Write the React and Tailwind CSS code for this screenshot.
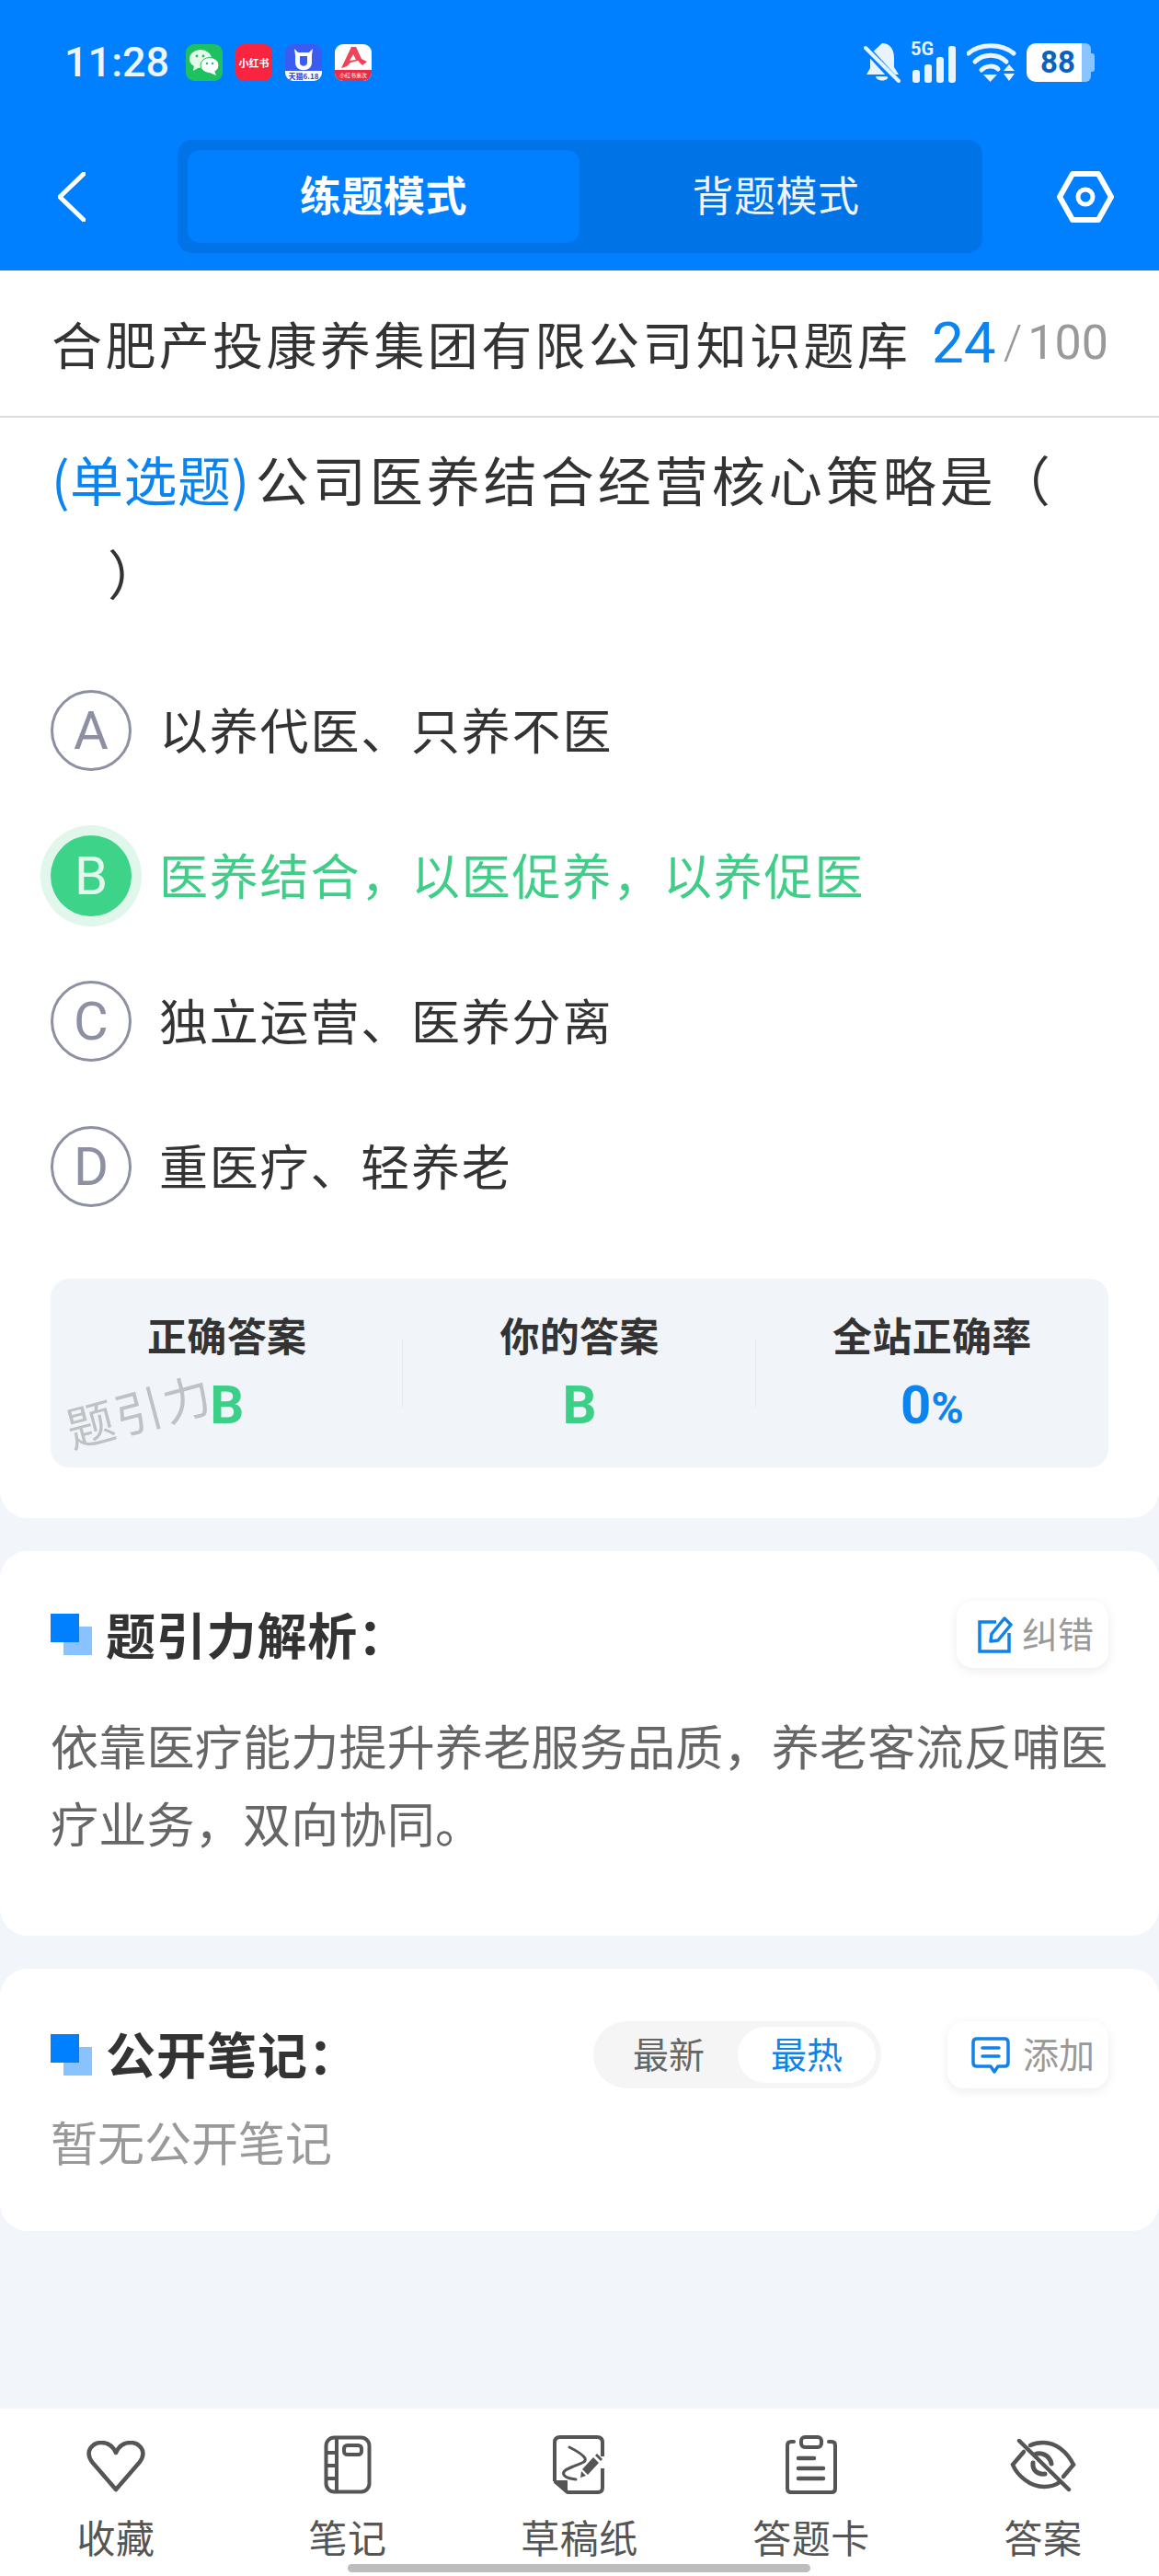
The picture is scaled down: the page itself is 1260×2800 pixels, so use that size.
import React from "react";

const Back = () => (
  <svg width="30" height="54" viewBox="0 0 30 54" className="shrink-0">
    <path d="M28 2 L2 27 L28 52" fill="none" stroke="#fff" strokeWidth="5" strokeLinecap="round" strokeLinejoin="miter" />
  </svg>
);
const Hex = () => (
  <svg width="62" height="56" viewBox="0 0 62 56" className="shrink-0">
    <path d="M17 3 H45 L59 28 L45 53 H17 L3 28 Z" fill="none" stroke="#fff" strokeWidth="6" strokeLinejoin="round" />
    <circle cx="31" cy="28" r="8" fill="none" stroke="#fff" strokeWidth="5" />
  </svg>
);
const Bell = () => (
  <svg width="40" height="44" viewBox="0 0 40 44" className="shrink-0">
    <path d="M20 1 C29 1 33 8 33 17 V27 L38 35 H3 L7 28 V13 Z" fill="#e8f4ff" />
    <path d="M13 37 H27 C26 43 14 43 13 37Z" fill="#e8f4ff" />
    <path d="M0 4 L36 43" stroke="#0080ff" strokeWidth="8" />
    <path d="M2 6 L38 42" stroke="#e8f4ff" strokeWidth="4" strokeLinecap="round" />
  </svg>
);
const Signal = () => (
  <div className="relative w-[50px] h-[44px] shrink-0">
    <span className="absolute left-0 top-[-5px] text-[20px] leading-[24px] font-bold text-[#e8f4ff] font-['Roboto',sans-serif]">5G</span>
    <svg width="50" height="44" viewBox="0 0 50 44" className="absolute left-0 top-0">
      <rect x="2" y="30" width="8" height="14" rx="3" fill="#e8f4ff" />
      <rect x="15" y="24" width="8" height="20" rx="3" fill="#e8f4ff" />
      <rect x="28" y="16" width="8" height="28" rx="3" fill="#e8f4ff" />
      <rect x="41" y="0" width="8" height="44" rx="3" transform="translate(0 4) scale(1 .91)" fill="#e8f4ff" />
    </svg>
  </div>
);
const Wifi = () => (
  <svg width="54" height="44" viewBox="0 0 54 44" className="shrink-0">
    <g fill="none" stroke="#e8f4ff" strokeWidth="5" strokeLinecap="round">
      <path d="M2 12 C14 1 38 1 51 12" />
      <path d="M9 21 C18 12 34 12 43 21" />
      <path d="M16 30 C21 25 30 25 34 29" />
    </g>
    <path d="M18 35 H33 L25.5 43 Z" fill="#e8f4ff" />
    <path d="M46 24 L52 31 H40 Z M40 34 H52 L46 42 Z" fill="#e8f4ff" />
  </svg>
);
const Battery = () => (
  <div className="relative flex w-[74px] h-[42px] shrink-0">
    <div className="w-[60px] h-[42px] bg-white rounded-l-[10px] flex items-center justify-center pl-[8px] text-[33px] leading-[42px] font-bold text-[#0a62be] font-['Roboto',sans-serif]">88</div>
    <div className="w-[10px] h-[42px] bg-[#8cc4ff] rounded-r-[6px]" />
    <div className="w-[4px] h-[20px] mt-[11px] bg-[#8cc4ff] rounded-r-[3px]" />
  </div>
);
const Wechat = () => (
  <div className="w-[40px] h-[40px] rounded-[9px] bg-[#1dc160] shrink-0 flex items-center justify-center">
    <svg width="34" height="30" viewBox="0 0 34 30">
      <ellipse cx="13" cy="11" rx="12" ry="10" fill="#e4f9ea" />
      <path d="M6 18 L5 24 L12 20 Z" fill="#e4f9ea" />
      <ellipse cx="23" cy="18" rx="10" ry="8.5" fill="#fff" stroke="#1dc160" strokeWidth="1" />
      <path d="M28 24 L30 29 L23 26 Z" fill="#fff" />
      <circle cx="9" cy="8" r="1.4" fill="#1dc160" /><circle cx="16" cy="8" r="1.4" fill="#1dc160" />
      <circle cx="20" cy="16" r="1.2" fill="#1dc160" /><circle cx="26" cy="16" r="1.2" fill="#1dc160" />
    </svg>
  </div>
);
const Xhs = () => (
  <div className="w-[40px] h-[40px] rounded-[9px] bg-[#f9243f] shrink-0 flex items-center justify-center text-[11px] leading-none font-bold text-white whitespace-nowrap">
    <span>小红书</span>
  </div>
);
const Tmall = () => (
  <div className="relative w-[40px] h-[40px] rounded-[9px] overflow-hidden bg-[#3a5cf0] shrink-0">
    <svg width="40" height="30" viewBox="0 0 40 30" className="absolute left-0 top-0">
      <path d="M10 5 L14 9 H26 L30 5 L29 12 V20 C29 31 11 31 11 20 V12 Z" fill="#fff" />
      <path d="M16 13 H24 V20 C24 25 16 25 16 20 Z" fill="#3a5cf0" />
    </svg>
    <div className="absolute left-0 right-0 bottom-0 h-[11px] bg-white text-[8px] leading-[11px] text-center font-bold text-[#2a45c9] whitespace-nowrap">天猫6.18</div>
  </div>
);
const RedA = () => (
  <div className="relative w-[40px] h-[40px] rounded-[9px] overflow-hidden bg-white shrink-0">
    <svg width="40" height="30" viewBox="0 0 40 30" className="absolute left-0 top-0">
      <path d="M18 3 L23 3 L29 16 L35 19 L30 23 L25 18 L17 20 C14 24 11 25 7 26 Z" fill="#f0435a" />
      <path d="M20 11 L23 17 L16 18 Z" fill="#fff" />
    </svg>
    <div className="absolute left-0 right-0 bottom-0 h-[12px] bg-[#ea2b45] text-[6px] leading-[12px] text-center text-white whitespace-nowrap">小红书素次</div>
  </div>
);

const Option = ({ letter, text, selected }) => (
  <div className="h-[158px] flex items-center">
    {selected ? (
      <div className="w-[88px] h-[88px] rounded-full bg-[#3dd388] shadow-[0_0_0_11px_#e2f7ec] flex items-center justify-center text-[58px] leading-none text-[#e2f9ee] font-['Roboto',sans-serif] shrink-0">{letter}</div>
    ) : (
      <div className="w-[88px] h-[88px] rounded-full border-[3px] border-[#8d8fa3] flex items-center justify-center text-[58px] leading-none text-[#8d8fa3] font-['Roboto',sans-serif] shrink-0">{letter}</div>
    )}
    <div className={`ml-[30px] mb-[4px] text-[53px] tracking-[1.8px] leading-[70px] ${selected ? "text-[#3fcd88]" : "text-[#333333]"}`}>{text}</div>
  </div>
);

const Stat = ({ label, children, border }) => (
  <div className="relative flex-1 h-full flex flex-col items-center">
    <div className="mt-[37px] text-[43px] leading-[46px] font-bold tracking-[0.3px] text-[#333333]">{label}</div>
    <div className="mt-[18px] h-[72px] flex items-center font-bold text-[58px] leading-none font-['Roboto',sans-serif]">{children}</div>
    {border && <div className="absolute right-0 top-[66px] h-[74px] w-px bg-[#e6e9ed]" />}
  </div>
);

const SquareMark = () => (
  <div className="relative w-[45px] h-[45px] shrink-0">
    <div className="absolute right-0 bottom-0 w-[31px] h-[31px] bg-[#88c2ff]" />
    <div className="absolute left-0 top-0 w-[31px] h-[31px] bg-[#0080ff]" />
  </div>
);

const EditIcon = () => (
  <svg width="38" height="40" viewBox="0 0 38 40" className="shrink-0">
    <path d="M20 6 H2 V38 H34 V18" fill="none" stroke="#1183e8" strokeWidth="3.5" />
    <path d="M14 27 L15 19 L29 2 L36 9 L22 26 Z" fill="#fff" stroke="#1183e8" strokeWidth="3.5" strokeLinejoin="round" />
  </svg>
);
const NoteIcon = () => (
  <svg width="42" height="40" viewBox="0 0 42 40" className="shrink-0">
    <path d="M6 2 H36 Q40 2 40 6 V28 Q40 32 36 32 H29 L25 38 L21 32 H6 Q2 32 2 28 V6 Q2 2 6 2 Z" fill="none" stroke="#1183e8" strokeWidth="3.5" strokeLinejoin="round" />
    <path d="M12 12 H30 M12 21 H30" stroke="#1183e8" strokeWidth="3.5" strokeLinecap="round" />
  </svg>
);

const Heart = () => (
  <svg width="64" height="56" viewBox="0 0 64 56" className="mt-[6px]">
    <path d="M32 53 L6 23 C-3 10 8 2 16 2 C24 2 29 6 32 13 C35 6 40 2 48 2 C56 2 67 10 58 23 Z" fill="none" stroke="#555" strokeWidth="4.5" strokeLinejoin="round" />
  </svg>
);
const NoteBook = () => (
  <svg width="52" height="64" viewBox="0 0 52 64">
    <rect x="2.5" y="2.5" width="47" height="59" rx="9" fill="none" stroke="#555" strokeWidth="4" />
    <path d="M14 3 V61 M3 19 H14 M3 33 H14 M3 47 H14" stroke="#555" strokeWidth="4" />
    <rect x="22" y="11" width="19" height="10" rx="3.5" fill="none" stroke="#555" strokeWidth="4" />
  </svg>
);
const Sketch = () => (
  <svg width="58" height="64" viewBox="0 0 58 64">
    <path d="M2 50 V8 Q2 2 8 2 H48 Q54 2 54 8 V23 M54 36 V57 Q54 62 49 62 H16 L2 50" fill="none" stroke="#555" strokeWidth="4" strokeLinejoin="round" />
    <path d="M2 50 H15 V62 Z" fill="#555" stroke="#555" strokeWidth="2" strokeLinejoin="round" />
    <path d="M18 13 C24 16 32 20 35 25 C37 30 28 31 22 34 C15 37 10 39 12 43 C14 47 20 47 25 48" fill="none" stroke="#555" strokeWidth="3" strokeLinecap="round" />
    <path d="M32 37 L38 43 L50 30 L44 24 Z" fill="#555" />
    <path d="M46 22 L52 28 L54 26 L48 20 Z" fill="#555" />
    <path d="M30 46 L31 39 L36 44 Z" fill="#555" />
  </svg>
);
const Clipboard = () => (
  <svg width="56" height="64" viewBox="0 0 56 64">
    <path d="M9 7 H6 Q2 7 2 11 V58 Q2 62 6 62 H50 Q54 62 54 58 V11 Q54 7 50 7 H47" fill="none" stroke="#555" strokeWidth="4" strokeLinecap="round" />
    <rect x="17" y="2" width="22" height="11" rx="4" fill="none" stroke="#555" strokeWidth="4" />
    <path d="M14 25 H31 M14 36 H41 M14 47 H41" stroke="#555" strokeWidth="4.5" strokeLinecap="round" />
  </svg>
);
const EyeOff = () => (
  <svg width="72" height="58" viewBox="0 0 72 58" className="mt-[4px]">
    <path d="M15 14 L3 28 C8 40 22 52 37 52 C44 52 50 50 54 47 M58 41 L69 28 C62 14 50 4 36 4 C31 4 26 5 22 7" fill="none" stroke="#555" strokeWidth="4.5" strokeLinecap="round" />
    <path d="M27 17 C33 14 43 17 45 27 M25 26 C24 34 30 39 38 38" fill="none" stroke="#555" strokeWidth="5" strokeLinecap="round" />
    <path d="M10 2 L64 55" stroke="#555" strokeWidth="4.5" strokeLinecap="round" />
  </svg>
);

const NavItem = ({ icon, label }) => (
  <div className="flex-1 flex flex-col items-center">
    <div className="h-[64px] flex items-start justify-center">{icon}</div>
    <div className="mt-[18px] text-[42px] leading-[56px] tracking-[0.5px] text-[#555555]">{label}</div>
  </div>
);

export default function App() {
  return (
    <div className="relative w-[1260px] h-[2800px] overflow-hidden bg-[#f2f5f9] flex flex-col font-['Noto_Sans_CJK_SC','Noto_Sans',sans-serif]">
      <header className="h-[294px] bg-[#0080ff] shrink-0">
        <div className="h-[42px] mt-0 pt-[47px] box-content flex items-center pl-[70px] pr-[70px]">
          <div className="w-[112px] text-[45px] leading-[42px] text-[#eaf5ff] font-medium font-['Roboto',sans-serif] whitespace-nowrap">11:28</div>
          <div className="ml-[20px] flex gap-[14px]">
            <Wechat />
            <Xhs />
            <Tmall />
            <RedA />
          </div>
          <div className="ml-auto flex items-center gap-[11px]">
            <Bell />
            <Signal />
            <Wifi />
            <Battery />
          </div>
        </div>
        <div className="mt-[63px] flex items-center pl-[63px]">
          <Back />
          <div className="ml-[100px] w-[875px] h-[123px] p-[11px] rounded-[16px] bg-[#0073e6] flex">
            <div className="w-[426px] pb-[6px] rounded-[14px] bg-[#0080ff] flex items-center justify-center text-[45px] font-bold text-white tracking-[0.5px]">练题模式</div>
            <div className="flex-1 pb-[6px] flex items-center justify-center text-[45px] text-[#eaf5ff] tracking-[0.5px]">背题模式</div>
          </div>
          <div className="ml-[81px]"><Hex /></div>
        </div>
      </header>

      <main className="shrink-0">
        <section className="bg-white rounded-b-[30px] h-[1356px]">
          <div className="h-[160px] border-b-2 border-[#dddddd] flex items-center justify-between pl-[56px] pr-[55px]">
            <div className="mb-[2px] text-[55px] tracking-[3.4px] leading-[70px] text-[#333333] whitespace-nowrap">合肥产投康养集团有限公司知识题库</div>
            <div className="flex items-center font-['Roboto',sans-serif] whitespace-nowrap">
              <span className="text-[62px] leading-[70px] text-[#0b84f0]">24</span>
              <span className="ml-[8px] text-[52px] leading-[70px] text-[#999999] font-light">/</span>
              <span className="ml-[6px] text-[52px] leading-[70px] text-[#999999]">100</span>
            </div>
          </div>
          <div className="pt-[15px] pb-[3px] pl-[56px] pr-[55px]">
            <div className="h-[102px] flex items-center text-[58px] leading-[102px] tracking-[4px] text-[#333333] whitespace-nowrap">
              <span className="text-[#0b84f0] tracking-[0.5px]">(单选题)</span>
              <span className="ml-[6px]">公司医养结合经营核心策略是（</span>
            </div>
            <div className="h-[102px] pl-[61px] text-[58px] leading-[102px] text-[#333333]">）</div>
          </div>
          <div className="mt-[39px] pl-[55px] pr-[55px]">
            <Option letter="A" text="以养代医、只养不医" />
            <Option letter="B" text="医养结合，以医促养，以养促医" selected />
            <Option letter="C" text="独立运营、医养分离" />
            <Option letter="D" text="重医疗、轻养老" />
            <div className="relative mt-[43px] h-[205px] rounded-[20px] bg-[#f1f5f9] flex">
              <Stat label="正确答案" border><span className="text-[#3ccf87]">B</span></Stat>
              <Stat label="你的答案" border><span className="text-[#3ccf87]">B</span></Stat>
              <Stat label="全站正确率"><span className="text-[#0b84f0]">0</span><span className="text-[#0b84f0] text-[48px] mt-[8px]">%</span></Stat>
              <div className="absolute left-[15px] top-[112px] text-[52px] leading-[60px] tracking-[2px] text-[#bfc1c4] -rotate-[15deg] whitespace-nowrap">题引力</div>
            </div>
          </div>
        </section>

        <section className="mt-[36px] bg-white rounded-[30px] h-[418px] pt-[54px] pl-[55px] pr-[55px]">
          <div className="h-[73px] flex items-center">
            <SquareMark />
            <div className="ml-[15px] pb-[2px] text-[54px] leading-[71px] font-bold text-[#333333] tracking-[0.8px]">题引力解析：</div>
            <div className="ml-auto w-[165px] h-[73px] rounded-[18px] bg-white shadow-[0_3px_12px_rgba(0,0,0,0.08)] flex items-center pl-[23px]">
              <EditIcon />
              <span className="ml-[10px] mb-[4px] text-[39px] leading-[69px] text-[#999999] whitespace-nowrap">纠错</span>
            </div>
          </div>
          <div className="mt-[42px] text-[52px] leading-[84px] tracking-[0.25px] text-[#666666]">依靠医疗能力提升养老服务品质，养老客流反哺医疗业务，双向协同。</div>
        </section>

        <section className="mt-[36px] bg-white rounded-[30px] h-[285px] pt-[57px] pl-[55px] pr-[55px]">
          <div className="h-[73px] flex items-center">
            <SquareMark />
            <div className="ml-[15px] pb-[3px] text-[54px] leading-[70px] font-bold text-[#333333] tracking-[1px]">公开笔记：</div>
            <div className="ml-auto w-[313px] h-[73px] rounded-full bg-[#f5f5f5] flex items-center pl-[43px] pr-[5px]">
              <span className="mb-[4px] text-[39px] text-[#666666] whitespace-nowrap">最新</span>
              <div className="ml-[36px] w-[150px] h-[61px] pb-[4px] rounded-full bg-white flex items-center justify-center text-[39px] text-[#1183e8] whitespace-nowrap">最热</div>
            </div>
            <div className="ml-[72px] w-[175px] h-[73px] rounded-[18px] bg-white shadow-[0_3px_12px_rgba(0,0,0,0.08)] flex items-center pl-[26px]">
              <NoteIcon />
              <span className="ml-[14px] mb-[4px] text-[39px] leading-[69px] text-[#999999] whitespace-nowrap">添加</span>
            </div>
          </div>
          <div className="mt-[27px] text-[51px] leading-[60px] text-[#999999]">暂无公开笔记</div>
        </section>
      </main>

      <nav className="mt-auto h-[182px] bg-white pt-[29px] flex">
        <NavItem icon={<Heart />} label="收藏" />
        <NavItem icon={<NoteBook />} label="笔记" />
        <NavItem icon={<Sketch />} label="草稿纸" />
        <NavItem icon={<Clipboard />} label="答题卡" />
        <NavItem icon={<EyeOff />} label="答案" />
      </nav>
      <div className="absolute left-[378px] bottom-[4px] w-[503px] h-[9px] rounded-full bg-[#bdbdbd]" />
    </div>
  );
}
